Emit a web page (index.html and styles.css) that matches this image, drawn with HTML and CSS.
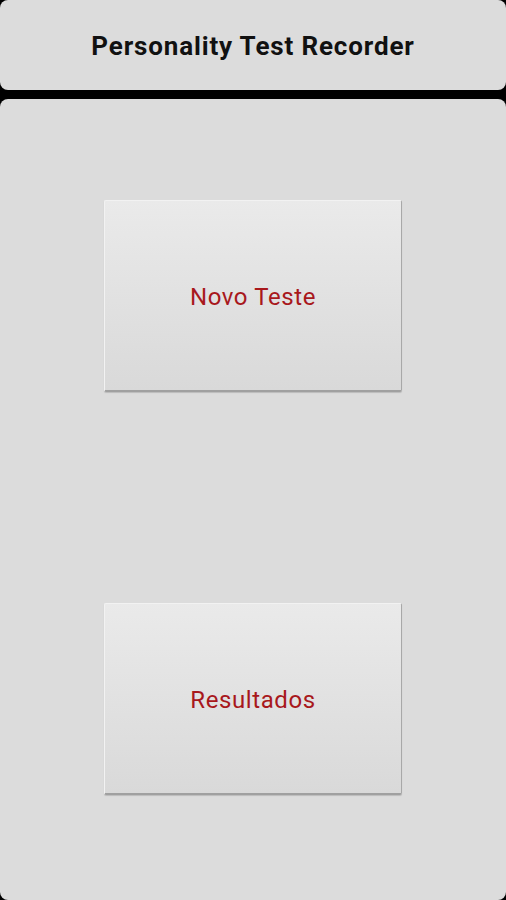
FILE: index.html
```html
<!DOCTYPE html>
<html lang="pt">
<head>
  <meta charset="UTF-8" />
  <meta name="viewport" content="width=device-width, initial-scale=1.0"/>
  <title>Personality Test Recorder</title>
  <link rel="stylesheet" href="styles.css">
</head>
<body>
  <header class="titlebar">
    <h1>Personality Test Recorder</h1>
  </header>

  <main class="panel">
    <button class="big-btn">Novo Teste</button>
    <button class="big-btn">Resultados</button>
  </main>
</body>
</html>
```

FILE: styles.css
```css
html, body {
  margin: 0;
  background-color: #000;
  font-family: Roboto, "Liberation Sans", sans-serif;
}
body {
  display: flex;
  flex-direction: column;
  gap: 9px;
  height: 900px;
  overflow: hidden;
}
.titlebar {
  height: 90px;
  flex: none;
  background-color: #dcdcdc;
  border-radius: 8px;
  display: flex;
  align-items: center;
  justify-content: center;
}
.titlebar h1 {
  margin: 2px 0 0 0;
  font-size: 26px;
  font-weight: bold;
  letter-spacing: 0.85px;
  color: #111;
}
.panel {
  flex: 1;
  background-color: #dcdcdc;
  border-radius: 8px;
  display: flex;
  flex-direction: column;
  align-items: center;
  padding-top: 101px;
  gap: 211px;
}
.big-btn {
  width: 298px;
  height: 192px;
  border: none;
  border-top: 1px solid #f2f2f2;
  border-left: 1px solid #f2f2f2;
  border-right: 1px solid #a8a8a8;
  border-bottom: 2px solid #a0a0a0;
  border-radius: 2px;
  background: linear-gradient(#eaeaea, #d9d9d9);
  box-shadow: 0 1px 1px rgba(0,0,0,0.15);
  color: #a8181c;
  font-family: Roboto, "Liberation Sans", sans-serif;
  font-size: 24px;
  letter-spacing: 0.6px;
  padding-top: 4px;
  cursor: pointer;
}
```
